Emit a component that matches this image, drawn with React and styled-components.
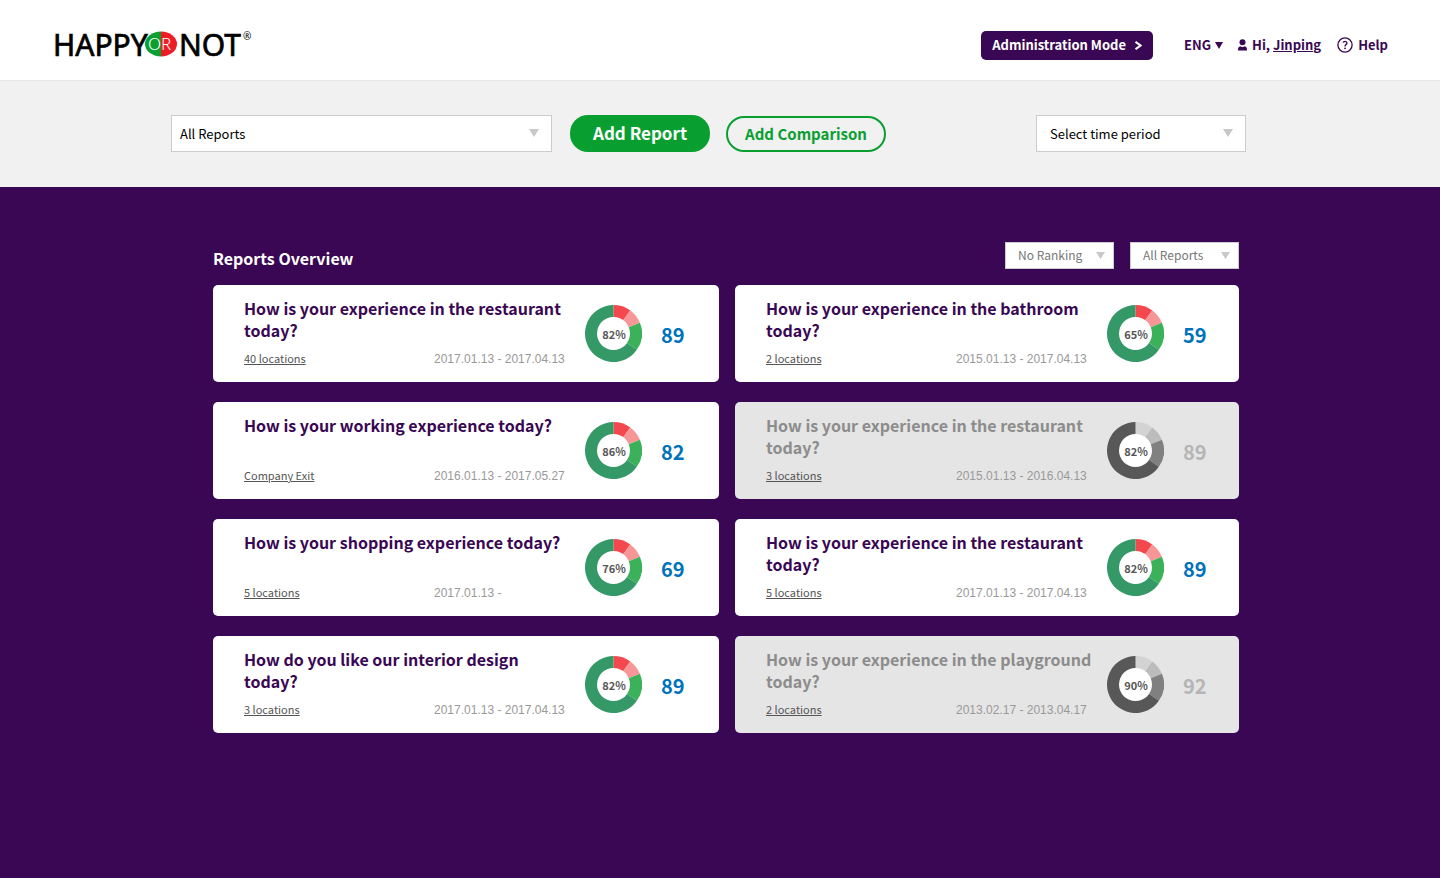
import React from 'react';
import styled, { createGlobalStyle } from 'styled-components';

const PURPLE = '#390753';
const GREEN = '#089f30';

const GlobalStyle = createGlobalStyle`
  *, *::before, *::after { box-sizing: border-box; }
  body {
    margin: 0;
    background: ${PURPLE};
    font-family: "Noto Sans CJK SC", "Open Sans", sans-serif;
    color: ${PURPLE};
  }
  button, select { font-family: inherit; margin: 0; cursor: pointer; }
  h1, h2, p { margin: 0; }
`;

const Page = styled.div`
  min-height: 100vh;
  display: flex;
  flex-direction: column;
`;

const Header = styled.header`
  display: flex;
  align-items: center;
  justify-content: space-between;
  min-height: 81px;
  padding: 10px 52px 0 53px;
  background: #fff;
  border-bottom: 1px solid #e6e6e6;
`;

const LogoLink = styled.a`
  display: block;
  svg { display: block; }
`;

const Nav = styled.nav`
  display: flex;
  align-items: center;
  font-size: 13px;
  font-weight: 700;
  line-height: 20px;
`;

const AdminButton = styled.button`
  display: flex;
  align-items: center;
  gap: 9px;
  height: 29px;
  margin-right: 31px;
  padding: 0 11px;
  border: 0;
  border-radius: 5px;
  background: ${PURPLE};
  color: #fff;
  font-size: 13px;
  font-weight: 700;
  line-height: 20px;
`;

const LanguageButton = styled.button`
  display: flex;
  align-items: center;
  gap: 4px;
  margin-right: 15px;
  padding: 0;
  border: 0;
  background: none;
  color: inherit;
  font-size: 13px;
  font-weight: 700;
  line-height: 20px;
`;

const UserGreeting = styled.div`
  display: flex;
  align-items: center;
  gap: 5px;
  margin-right: 16px;
  a { color: inherit; }
`;

const HelpLink = styled.a`
  display: flex;
  align-items: center;
  gap: 5px;
  color: inherit;
  text-decoration: none;
`;

const Toolbar = styled.section`
  display: flex;
  align-items: center;
  min-height: 106px;
  padding: 0 194px 2px 171px;
  background: #f1f1f1;
`;

const SelectShell = styled.div`
  display: grid;
  grid-template-columns: minmax(0, 1fr);
  align-items: center;
  flex: 0 1 ${(p) => p.$width}px;
  > * { grid-area: 1 / 1; }
  > svg { justify-self: end; margin-right: ${(p) => (p.$small ? 9 : 13)}px; pointer-events: none; }
`;

const SelectBox = styled.select`
  appearance: none;
  width: 100%;
  height: ${(p) => (p.$small ? 27 : 37)}px;
  padding: 0 30px ${(p) => (p.$small ? 2 : 0)}px ${(p) => p.$indent}px;
  border: 1px solid #ccc;
  border-radius: 0;
  background: #fff;
  color: ${(p) => (p.$small ? '#777' : '#000')};
  font-size: ${(p) => (p.$small ? 12 : 13)}px;
`;

const PillButton = styled.button`
  height: ${(p) => (p.$outline ? 36 : 37)}px;
  margin-left: ${(p) => (p.$outline ? 16 : 18)}px;
  padding: 0 ${(p) => (p.$outline ? 17 : 23)}px;
  border: ${(p) => (p.$outline ? `2px solid ${GREEN}` : '0')};
  border-radius: 18px;
  background: ${(p) => (p.$outline ? 'transparent' : GREEN)};
  color: ${(p) => (p.$outline ? GREEN : '#fff')};
  font-size: ${(p) => (p.$outline ? 15 : 17)}px;
  font-weight: 700;
  line-height: 24px;
  white-space: nowrap;
`;

const ToolbarActions = styled.div`
  display: flex;
  align-items: flex-end;
`;

const Spacer = styled.div`
  flex: 1;
`;

const Main = styled.main`
  flex: 1;
  padding: 55px 201px 40px 213px;
  background: ${PURPLE};
`;

const OverviewBar = styled.div`
  display: flex;
  align-items: flex-start;
  gap: 16px;
  min-height: 27px;
  margin-bottom: 15px;
`;

const OverviewTitle = styled.h1`
  flex: 1;
  padding-top: 4px;
  color: #fff;
  font-size: 16px;
  line-height: 24px;
`;

const ReportGrid = styled.div`
  display: grid;
  grid-template-columns: 506fr 504fr;
  gap: 20px 16px;
`;

const Card = styled.article`
  display: flex;
  align-items: center;
  min-height: 97px;
  padding: 0 10px 0 31px;
  border-radius: 5px;
  background: ${(p) => (p.$inactive ? '#e5e5e5' : '#fff')};
`;

const CardBody = styled.div`
  display: flex;
  flex-direction: column;
  justify-content: space-between;
  flex: 0 1 331px;
  min-height: 73px;
  margin-right: 10px;
  padding-bottom: 3px;
`;

const CardTitle = styled.h2`
  color: ${(p) => (p.$inactive ? '#8c8c8c' : PURPLE)};
  font-size: 16px;
  line-height: 22px;
`;

const CardMeta = styled.div`
  display: grid;
  grid-template-columns: 190px 1fr;
  align-items: baseline;
  line-height: 16px;
`;

const LocationLink = styled.a`
  justify-self: start;
  color: #555;
  font-size: 11px;
`;

const DateRange = styled.span`
  color: #999;
  font-family: "Liberation Sans", Arial, sans-serif;
  font-size: 12px;
  white-space: nowrap;
`;

const Chart = styled.svg`
  display: block;
  flex: none;
  text {
    font-size: 11px;
    font-weight: 700;
    fill: #555;
    text-anchor: middle;
  }
`;

const Score = styled.strong`
  margin-left: 19px;
  padding-top: 3px;
  color: ${(p) => (p.$inactive ? '#b5b5b5' : '#0072bc')};
  font-size: 20px;
  line-height: 24px;
`;

const ACTIVE_COLORS = ['#f4484f', '#f79696', '#3bb15a', '#349966'];
const INACTIVE_COLORS = ['#d3d3d3', '#bcbcbc', '#808080', '#585858'];
const STOPS = [0, 36, 68, 125, 360];

function slicePath(from, to) {
  const point = (deg) => {
    const a = ((deg - 90) * Math.PI) / 180;
    return `${28.5 + 28.5 * Math.cos(a)} ${28.5 + 28.5 * Math.sin(a)}`;
  };
  return `M28.5 28.5 L${point(from)} A28.5 28.5 0 ${to - from > 180 ? 1 : 0} 1 ${point(to)} Z`;
}

function Donut({ percent, inactive }) {
  const colors = inactive ? INACTIVE_COLORS : ACTIVE_COLORS;
  return (
    <Chart width="57" height="57" viewBox="0 0 57 57" role="img" aria-label={`${percent}%`}>
      {colors.map((color, i) => (
        <path key={color} d={slicePath(STOPS[i], STOPS[i + 1])} fill={color} />
      ))}
      <circle cx="28.5" cy="28.5" r="16.5" fill="#fff" />
      <text x="29" y="34">{percent}%</text>
    </Chart>
  );
}

function Triangle({ width, height, color }) {
  return (
    <svg width={width} height={height} viewBox="0 0 10 10" preserveAspectRatio="none" aria-hidden="true">
      <path d="M0 0H10L5 10Z" fill={color} />
    </svg>
  );
}

function Dropdown({ label, options, width, indent, small }) {
  return (
    <SelectShell $width={width} $small={small}>
      <SelectBox aria-label={label} $indent={indent} $small={small}>
        {options.map((o) => (
          <option key={o}>{o}</option>
        ))}
      </SelectBox>
      <Triangle width={small ? 9 : 10} height={small ? 7 : 8} color="#c8c8c8" />
    </SelectShell>
  );
}

function Logo() {
  return (
    <svg width="204" height="46" viewBox="0 0 204 46" fontFamily='"Noto Sans", sans-serif' role="img" aria-label="HappyOrNot">
      <text x="0" y="34" fontSize="30" fill="#000" stroke="#000" strokeWidth="0.7">HAPPY</text>
      <path d="M108 9.5A16 12.5 0 0 0 108 34.5Z" fill="#0a9f31" />
      <path d="M108 9.5A16 12.5 0 0 1 108 34.5Z" fill="#ee1c24" />
      <text x="95" y="28" fontSize="17" fontWeight="300" fill="#fff">OR</text>
      <text x="126" y="34" fontSize="30" fill="#000" stroke="#000" strokeWidth="0.7">NOT</text>
      <text x="190" y="18" fontSize="10" fill="#000">®</text>
    </svg>
  );
}

const REPORTS = [
  { title: 'How is your experience in the restaurant today?', place: '40 locations', dates: '2017.01.13 - 2017.04.13', percent: 82, score: 89 },
  { title: 'How is your experience in the bathroom today?', place: '2 locations', dates: '2015.01.13 - 2017.04.13', percent: 65, score: 59 },
  { title: 'How is your working experience today?', place: 'Company Exit', dates: '2016.01.13 - 2017.05.27', percent: 86, score: 82 },
  { title: 'How is your experience in the restaurant today?', place: '3 locations', dates: '2015.01.13 - 2016.04.13', percent: 82, score: 89, inactive: true },
  { title: 'How is your shopping experience today?', place: '5 locations', dates: '2017.01.13 -', percent: 76, score: 69 },
  { title: 'How is your experience in the restaurant today?', place: '5 locations', dates: '2017.01.13 - 2017.04.13', percent: 82, score: 89 },
  { title: 'How do you like our interior design today?', place: '3 locations', dates: '2017.01.13 - 2017.04.13', percent: 82, score: 89 },
  { title: 'How is your experience in the playground today?', place: '2 locations', dates: '2013.02.17 - 2013.04.17', percent: 90, score: 92, inactive: true },
];

function ReportCard({ report }) {
  const { title, place, dates, percent, score, inactive } = report;
  return (
    <Card $inactive={inactive}>
      <CardBody>
        <CardTitle $inactive={inactive}>{title}</CardTitle>
        <CardMeta>
          <LocationLink href="#locations">{place}</LocationLink>
          <DateRange>{dates}</DateRange>
        </CardMeta>
      </CardBody>
      <Donut percent={percent} inactive={inactive} />
      <Score $inactive={inactive}>{score}</Score>
    </Card>
  );
}

export default function App() {
  return (
    <Page>
      <GlobalStyle />
      <Header>
        <LogoLink href="#home"><Logo /></LogoLink>
        <Nav>
          <AdminButton type="button">
            Administration Mode
            <svg width="7" height="9" viewBox="0 0 7 9" fill="none" stroke="#fff" strokeWidth="2" aria-hidden="true">
              <path d="M0.5 0.8L5.5 4.5L0.5 8.2" />
            </svg>
          </AdminButton>
          <LanguageButton type="button">
            ENG
            <Triangle width={8} height={7} color={PURPLE} />
          </LanguageButton>
          <UserGreeting>
            <svg width="9" height="12" viewBox="0 0 9 12" fill={PURPLE} aria-hidden="true">
              <circle cx="4.5" cy="3.2" r="3" />
              <path d="M0 11.5V10Q0 7.6 2.2 7.2Q4.5 8.6 6.8 7.2Q9 7.6 9 10V11.5Z" />
            </svg>
            <span>Hi, <a href="#profile">Jinping</a></span>
          </UserGreeting>
          <HelpLink href="#help">
            <svg width="16" height="16" viewBox="0 0 16 16" fill="none" stroke={PURPLE} aria-hidden="true">
              <circle cx="8" cy="8" r="7.1" strokeWidth="1.3" />
              <path d="M6 5.6Q6.3 4.3 8 4.3Q10 4.4 10 6Q10 6.9 9 7.6Q8 8.3 8 9.4" strokeWidth="1.3" />
              <circle cx="8" cy="11.3" r="0.9" fill={PURPLE} stroke="none" />
            </svg>
            Help
          </HelpLink>
        </Nav>
      </Header>
      <Toolbar>
        <Dropdown label="Report" options={['All Reports']} width={381} indent={8} />
        <ToolbarActions>
          <PillButton type="button">Add Report</PillButton>
          <PillButton type="button" $outline>Add Comparison</PillButton>
        </ToolbarActions>
        <Spacer />
        <Dropdown label="Time period" options={['Select time period']} width={210} indent={13} />
      </Toolbar>
      <Main>
        <OverviewBar>
          <OverviewTitle>Reports Overview</OverviewTitle>
          <Dropdown label="Ranking" options={['No Ranking']} width={109} indent={12} small />
          <Dropdown label="Filter reports" options={['All Reports']} width={109} indent={12} small />
        </OverviewBar>
        <ReportGrid>
          {REPORTS.map((report, i) => (
            <ReportCard key={i} report={report} />
          ))}
        </ReportGrid>
      </Main>
    </Page>
  );
}
